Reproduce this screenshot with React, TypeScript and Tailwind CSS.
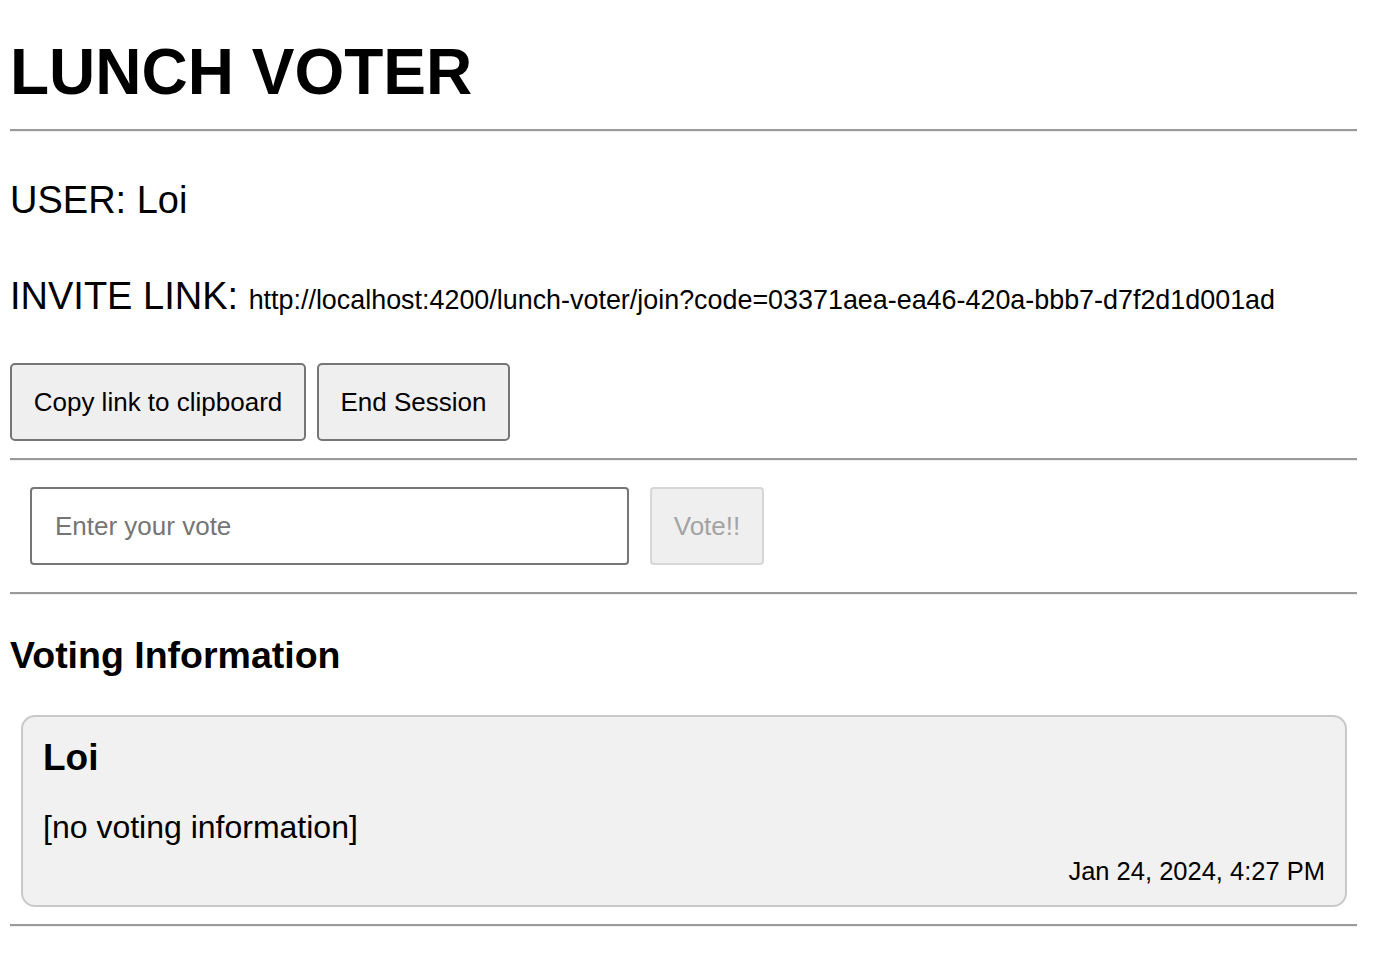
import { useState } from "react"

const inviteLink =
  "http://localhost:4200/lunch-voter/join?code=03371aea-ea46-420a-bbb7-d7f2d1d001ad"

function Rule() {
  return <hr className="h-0 border-0 border-t-2 border-t-[#9a9a9a] border-b border-b-[#eeeeee]" />
}

export default function App() {
  const [vote, setVote] = useState("")

  return (
    <main className="min-h-screen bg-white text-black font-['Liberation_Sans',Arial,sans-serif] pl-[10px] pr-[17px]">
      <h1 className="pt-[40px] mb-[25px] text-[64px] leading-none font-bold">LUNCH VOTER</h1>
      <Rule />

      <p className="mt-[49px] text-[38px] leading-none">USER: Loi</p>
      <p className="mt-[58px] text-[38px] leading-none whitespace-nowrap">
        INVITE LINK: <span className="text-[26.9px]">{inviteLink}</span>
      </p>

      <div className="mt-[48px] mb-[17px] flex gap-[11px]">
        <button className="h-[78px] w-[296px] rounded-[5px] border-2 border-[#767676] bg-[#efefef] text-[26px] leading-none">
          Copy link to clipboard
        </button>
        <button className="h-[78px] w-[193px] rounded-[5px] border-2 border-[#767676] bg-[#efefef] text-[26px] leading-none">
          End Session
        </button>
      </div>
      <Rule />

      {/* Vote form */}
      <form
        className="flex gap-[21px] pl-[20px] pt-[26px] pb-[27px]"
        onSubmit={(e) => e.preventDefault()}
      >
        <input
          value={vote}
          onChange={(e) => setVote(e.target.value)}
          placeholder="Enter your vote"
          className="h-[78px] w-[599px] rounded-[4px] border-2 border-[#767676] bg-white px-[23px] text-[26px] placeholder:text-[#757575] outline-none"
        />
        <button
          disabled={!vote}
          className="h-[78px] w-[114px] rounded-[4px] border-2 border-[#d6d6d6] bg-[#efefef] text-[26px] leading-none text-[#a3a3a3]"
        >
          Vote!!
        </button>
      </form>
      <Rule />

      <h2 className="mt-[42px] text-[37.5px] leading-none font-bold">Voting Information</h2>

      <div className="mt-[40px] mb-[17px] ml-[11px] mr-[10px] rounded-[14px] border-2 border-[#c9c9c9] bg-[#f1f1f1] pl-[20px] pr-[20px] pt-[22px] pb-[21px]">
        <h3 className="text-[37px] leading-none font-bold">Loi</h3>
        <p className="mt-[35px] text-[32px] leading-none">[no voting information]</p>
        <p className="mt-[16px] text-right text-[25.5px] leading-none">Jan 24, 2024, 4:27 PM</p>
      </div>
      <Rule />
    </main>
  )
}
